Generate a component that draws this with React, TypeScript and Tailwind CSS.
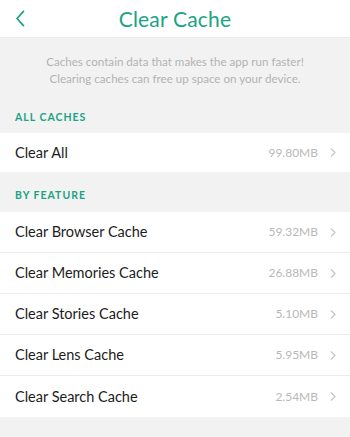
import React from 'react';

const features = [
  { name: 'Clear Browser Cache', size: '59.32MB' },
  { name: 'Clear Memories Cache', size: '26.88MB' },
  { name: 'Clear Stories Cache', size: '5.10MB' },
  { name: 'Clear Lens Cache', size: '5.95MB' },
  { name: 'Clear Search Cache', size: '2.54MB' },
];

const Chevron: React.FC<{ className?: string }> = ({ className }) => (
  <svg viewBox="0 0 6 10" className={className} fill="none" stroke="currentColor" strokeWidth="1.2">
    <path d="M1 1l4 4-4 4" />
  </svg>
);

const Row: React.FC<{ name: string; size: string; h: string }> = ({ name, size, h }) => (
  <div className={`flex items-center pl-[15px] pr-[14px] bg-white ${h}`}>
    <span className="text-[14.5px] text-[#1c1c1c] flex-1">{name}</span>
    <span className="text-[12px] text-[#b8b8b8] mr-[12px]">{size}</span>
    <Chevron className="w-[6px] h-[11px] text-[#c4c4c4]" />
  </div>
);

const App: React.FC = () => {
  return (
    <div className="w-[350px] h-[437px] bg-[#f2f2f2] overflow-hidden font-['Lato','Open_Sans',sans-serif]">
      <header className="relative h-[38px] bg-white flex items-center justify-center border-b border-[#ebebeb]">
        <svg viewBox="0 0 12 20" className="absolute left-[15px] top-[10px] w-[11px] h-[17px] text-[#1ba383]" fill="none" stroke="currentColor" strokeWidth="2">
          <path d="M10 1L2 10l8 9" />
        </svg>
        <h1 className="text-[21px] text-[#1ba383] tracking-[0.2px]">Clear Cache</h1>
      </header>

      <p className="text-center text-[11.6px] leading-[17px] text-[#b3b3b3] pt-[15px] pb-[15px]">
        Caches contain data that makes the app run faster!
        <br />
        Clearing caches can free up space on your device.
      </p>

      <h2 className="px-[15px] pt-[8px] h-[31px] text-[10.5px] font-bold tracking-[1px] text-[#1ba383]">ALL CACHES</h2>
      <Row name="Clear All" size="99.80MB" h="h-[39px]" />

      <h2 className="px-[15px] pt-[16px] h-[40px] text-[10.5px] font-bold tracking-[1px] text-[#1ba383]">BY FEATURE</h2>
      <div className="divide-y divide-[#ededed]">
        {features.map((f) => (
          <Row key={f.name} name={f.name} size={f.size} h="h-[41px]" />
        ))}
      </div>
    </div>
  );
};

export default App;
